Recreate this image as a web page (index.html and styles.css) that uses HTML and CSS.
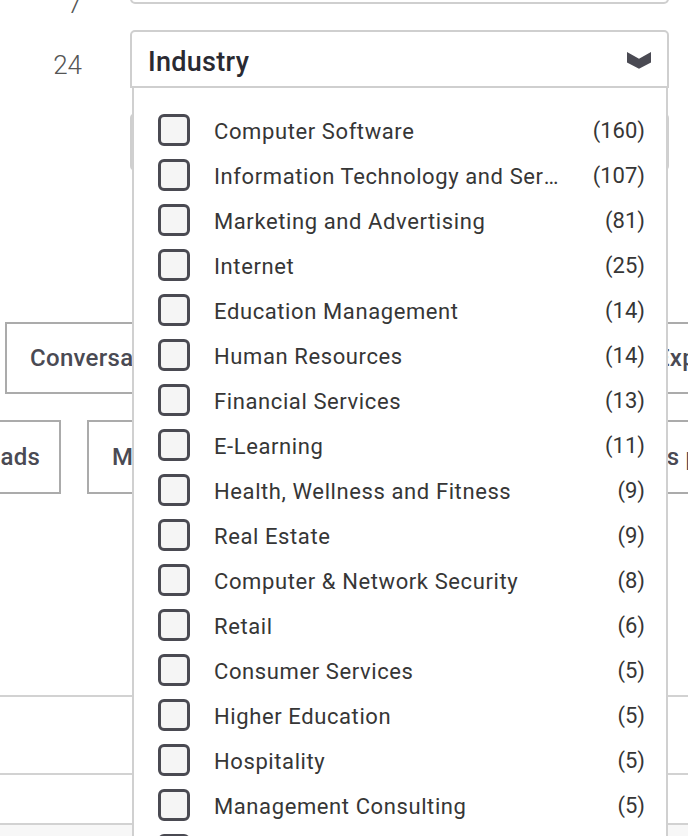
FILE: index.html
```html
<!DOCTYPE html>
<html>
<head>
<meta charset="utf-8">
<link rel="stylesheet" href="styles.css">
</head>
<body>
<div class="page">
  <div class="form">
    <div class="row row-first">
      <div class="num num-first">7</div>
      <div class="select"></div>
    </div>
    <div class="row">
      <div class="num">24</div>
      <div class="select select-open">
        <span class="select-label">Industry</span>
        <svg class="chevron" width="24" height="17" viewBox="0 0 24 17"><polygon points="0,0 12,6.7 24,0 24,10.5 12,16.7 0,10.5" fill="#4a4a53"/></svg>
      </div>
    </div>
    <div class="row">
      <div class="num"></div>
      <div class="select"></div>
    </div>
  </div>

  <div class="chips">
    <div class="chip-row chip-row-a">
      <div class="chip chip-a1">Conversations</div>
      <div class="chip chip-a2">Export</div>
    </div>
    <div class="chip-row chip-row-b">
      <div class="chip chip-b1">Leads</div>
      <div class="chip chip-b2">Marketing qualified</div>
      <div class="chip chip-b3">Sales pipeline</div>
    </div>
  </div>

  <div class="table">
    <div class="trow trow-1"></div>
    <div class="trow trow-2"></div>
    <div class="trow trow-3"></div>
  </div>

  <div class="dropdown">
    <ul class="options">
      <li class="option"><span class="box"></span><span class="name">Computer Software</span><span class="count">(160)</span></li>
      <li class="option"><span class="box"></span><span class="name">Information Technology and Services</span><span class="count">(107)</span></li>
      <li class="option"><span class="box"></span><span class="name">Marketing and Advertising</span><span class="count">(81)</span></li>
      <li class="option"><span class="box"></span><span class="name">Internet</span><span class="count">(25)</span></li>
      <li class="option"><span class="box"></span><span class="name">Education Management</span><span class="count">(14)</span></li>
      <li class="option"><span class="box"></span><span class="name">Human Resources</span><span class="count">(14)</span></li>
      <li class="option"><span class="box"></span><span class="name">Financial Services</span><span class="count">(13)</span></li>
      <li class="option"><span class="box"></span><span class="name">E-Learning</span><span class="count">(11)</span></li>
      <li class="option"><span class="box"></span><span class="name">Health, Wellness and Fitness</span><span class="count">(9)</span></li>
      <li class="option"><span class="box"></span><span class="name">Real Estate</span><span class="count">(9)</span></li>
      <li class="option"><span class="box"></span><span class="name">Computer &amp; Network Security</span><span class="count">(8)</span></li>
      <li class="option"><span class="box"></span><span class="name">Retail</span><span class="count">(6)</span></li>
      <li class="option"><span class="box"></span><span class="name">Consumer Services</span><span class="count">(5)</span></li>
      <li class="option"><span class="box"></span><span class="name">Higher Education</span><span class="count">(5)</span></li>
      <li class="option"><span class="box"></span><span class="name">Hospitality</span><span class="count">(5)</span></li>
      <li class="option"><span class="box"></span><span class="name">Management Consulting</span><span class="count">(5)</span></li>
      <li class="option"><span class="box"></span><span class="name">Telecommunications</span><span class="count">(4)</span></li>
    </ul>
  </div>
</div>
</body>
</html>
```

FILE: styles.css
```css
* { box-sizing: border-box; }
html, body {
  margin: 0;
  padding: 0;
  background: #ffffff;
  width: 688px;
  height: 836px;
  overflow: hidden;
}
body {
  font-family: Roboto, "Liberation Sans", sans-serif;
  color: #333;
}
.page {
  position: relative;
  width: 688px;
  height: 836px;
  overflow: hidden;
}

/* form rows */
.form {
  display: flex;
  flex-direction: column;
  gap: 25px;
  margin-top: -54px;
}
.row {
  display: grid;
  grid-template-columns: 130px 539px;
  align-items: center;
}
.row-first { margin-bottom: 1px; }
.num {
  font-size: 26px;
  font-weight: 300;
  color: #555;
  text-align: right;
  padding-right: 48px;
  padding-top: 11px;
}
.num-first {
  align-self: end;
  margin-bottom: -13px;
  padding-top: 0;
  line-height: 26px;
}
.select {
  height: 58px;
  border: 2px solid #cfcfcf;
  border-radius: 5px;
  background: #fff;
  display: flex;
  align-items: center;
  justify-content: space-between;
  padding: 0 16px 0 16px;
}
.select-open {
  border-radius: 5px 5px 0 0;
}
.select-label {
  font-size: 27px;
  font-weight: 500;
  color: #2a2a32;
  letter-spacing: 0.3px;
  padding-top: 5px;
}
.chevron { display: block; margin-top: 2px; }

/* chips behind dropdown */
.chips {
  margin-top: 151px;
  display: flex;
  flex-direction: column;
  gap: 26px;
}
.chip-row {
  display: flex;
  gap: 26px;
  white-space: nowrap;
}
.chip {
  flex: none;
  height: 72px;
  border: 2px solid #ababab;
  display: flex;
  align-items: center;
  padding: 0 23px;
  font-size: 24px;
  font-weight: 500;
  color: #4a4a53;
  letter-spacing: 0.3px;
  overflow: hidden;
}
.chip-a1 { margin-left: 5px; width: 600px; }
.chip-a2 { width: 200px; }
.chip-row-b { height: 74px; }
.chip-row-b .chip { height: 74px; }
.chip-b1 { margin-left: -51px; width: 112px; }
.chip-b2 { width: 479px; }
.chip-b3 { width: 200px; padding-left: 25px; }

/* table lines behind */
.table {
  margin-top: 201px;
}
.trow {
  border-top: 2px solid #d2d2d2;
}
.trow-1 { height: 78px; }
.trow-2 { height: 50px; }
.trow-3 { height: 40px; background: #f7f7f7; }

/* dropdown menu overlay */
.dropdown {
  position: absolute;
  left: 132px;
  top: 88px;
  width: 536px;
  height: 800px;
  background: #fff;
  border-left: 2px solid #d0d0d0;
  border-right: 2px solid #d0d0d0;
}
.options {
  list-style: none;
  margin: 0;
  padding: 19px 21px 0 24px;
}
.option {
  height: 45px;
  display: flex;
  align-items: center;
  font-size: 22px;
  color: #363636;
  letter-spacing: 0.6px;
}
.box {
  flex: none;
  width: 32px;
  height: 32px;
  border: 3px solid #4a4a52;
  border-radius: 6px;
  background: #f5f5f5;
  margin-right: 24px;
}
.name {
  flex: 1;
  min-width: 0;
  white-space: nowrap;
  overflow: hidden;
  text-overflow: ellipsis;
  padding-top: 4px;
}
.count {
  flex: none;
  width: 80px;
  text-align: right;
  padding-top: 2px;
  letter-spacing: 0;
}
```
